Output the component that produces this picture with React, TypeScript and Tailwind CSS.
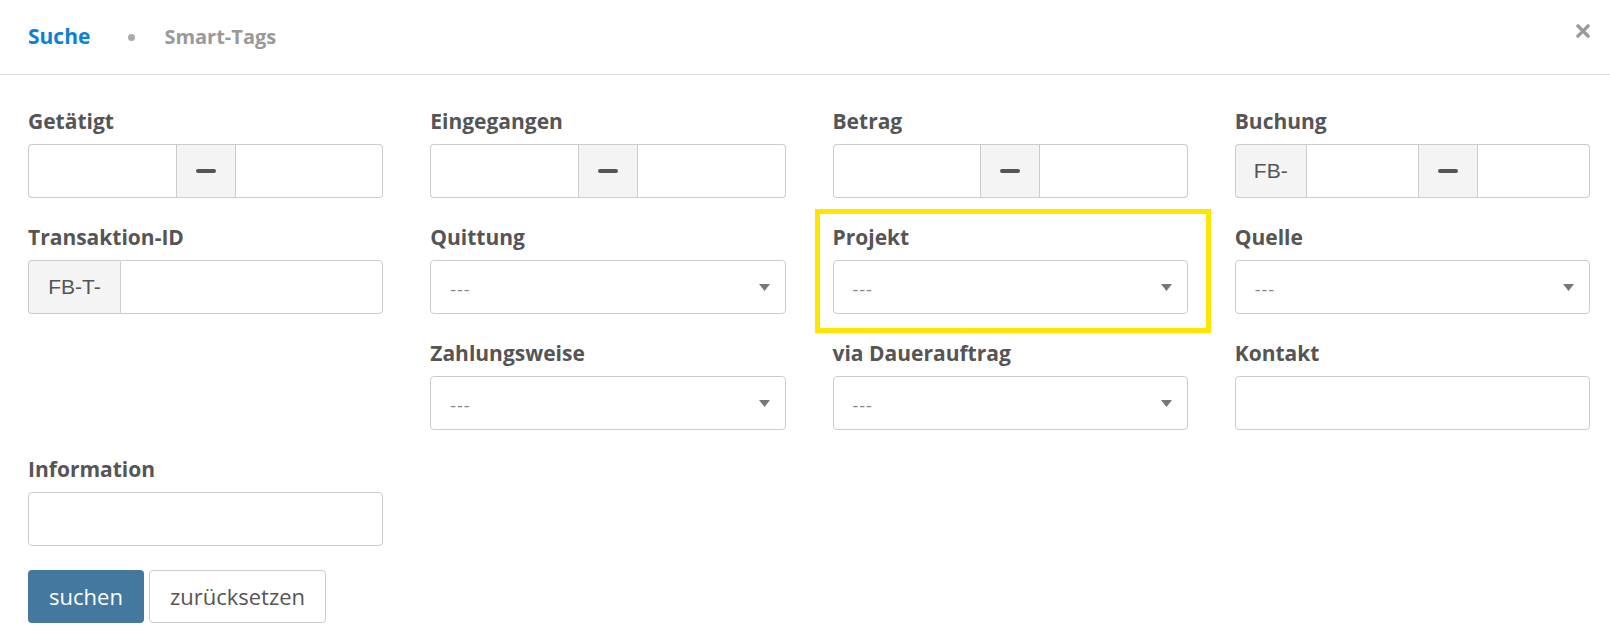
import React from 'react'

const label = 'block text-[21px] leading-[28px] font-bold text-[#555] mb-[9px]'
const box = 'h-[54px] border border-[#ccc] bg-white'
const addon =
  'h-[54px] border border-[#ccc] bg-[#f4f4f4] flex items-center justify-center text-[#555] text-[21px] font-["Liberation_Sans",Arial,sans-serif]'

function Minus() {
  return <span className="block w-[20px] h-[4px] rounded-[2px] bg-[#555]" />
}

function Range({ prefix }: { prefix?: string }) {
  return (
    <div className="flex">
      {prefix && (
        <span className={`${addon} w-[71px] rounded-l-[4px] border-r-0`}>{prefix}</span>
      )}
      <input className={`${box} flex-1 min-w-0 border-r-0 ${prefix ? '' : 'rounded-l-[4px]'}`} />
      <span className={`${addon} w-[60px]`}>
        <Minus />
      </span>
      <input className={`${box} flex-1 min-w-0 border-l-0 rounded-r-[4px]`} />
    </div>
  )
}

function Prefixed({ prefix }: { prefix: string }) {
  return (
    <div className="flex">
      <span className={`${addon} w-[92px] rounded-l-[4px] border-r-0`}>{prefix}</span>
      <input className={`${box} flex-1 min-w-0 rounded-r-[4px]`} />
    </div>
  )
}

function Select() {
  return (
    <div className={`${box} rounded-[4px] flex items-center justify-between pl-[19px] pr-[15px]`}>
      <span className="text-[18px] text-[#888] tracking-[1px] mt-[4px]">---</span>
      <svg width="11" height="7" viewBox="0 0 11 7">
        <path d="M0 0 H11 L5.5 7 Z" fill="#777" />
      </svg>
    </div>
  )
}

function Field({ title, children }: { title: string; children: React.ReactNode }) {
  return (
    <div>
      <label className={label}>{title}</label>
      {children}
    </div>
  )
}

export default function App() {
  return (
    <div className="w-[1610px] h-[640px] bg-white font-['Open_Sans',sans-serif] text-[#555]">
      <header className="h-[75px] border-b border-[#ddd] flex items-center pl-[28px] pr-[20px]">
        <span className="text-[21px] font-bold text-[#0a80d8]">Suche</span>
        <span className="ml-[38px] w-[7px] h-[7px] rounded-full bg-[#aaa]" />
        <span className="ml-[29px] text-[20px] font-bold text-[#999]">Smart-Tags</span>
        <button className="ml-auto mb-[12px]">
          <svg width="14" height="14" viewBox="0 0 14 14">
            <path d="M2 2 L12 12 M12 2 L2 12" stroke="#999" strokeWidth="3.2" strokeLinecap="square" />
          </svg>
        </button>
      </header>

      <div className="pt-[32px] pl-[28px] pr-[20px]">
        <div className="grid grid-cols-4 gap-x-[47px] gap-y-[25px]">
          <Field title="Getätigt">
            <Range />
          </Field>
          <Field title="Eingegangen">
            <Range />
          </Field>
          <Field title="Betrag">
            <Range />
          </Field>
          <Field title="Buchung">
            <Range prefix="FB-" />
          </Field>

          <Field title="Transaktion-ID">
            <Prefixed prefix="FB-T-" />
          </Field>
          <Field title="Quittung">
            <Select />
          </Field>
          <div className="relative">
            <div className="absolute -top-[14px] -left-[18px] -right-[23px] -bottom-[19px] border-[5px] border-[#ffe600] pointer-events-none" />
            <Field title="Projekt">
              <Select />
            </Field>
          </div>
          <Field title="Quelle">
            <Select />
          </Field>

          <div />
          <Field title="Zahlungsweise">
            <Select />
          </Field>
          <Field title="via Dauerauftrag">
            <Select />
          </Field>
          <Field title="Kontakt">
            <input className={`${box} w-full rounded-[4px]`} />
          </Field>

          <Field title="Information">
            <input className={`${box} w-full rounded-[4px]`} />
          </Field>
        </div>

        <div className="mt-[24px] flex gap-[5px]">
          <button className="h-[53px] w-[116px] rounded-[4px] bg-[#45789f] text-white text-[22px]">
            suchen
          </button>
          <button className="h-[53px] w-[177px] rounded-[4px] border border-[#ccc] bg-white text-[#555] text-[22px]">
            zurücksetzen
          </button>
        </div>
      </div>
    </div>
  )
}
